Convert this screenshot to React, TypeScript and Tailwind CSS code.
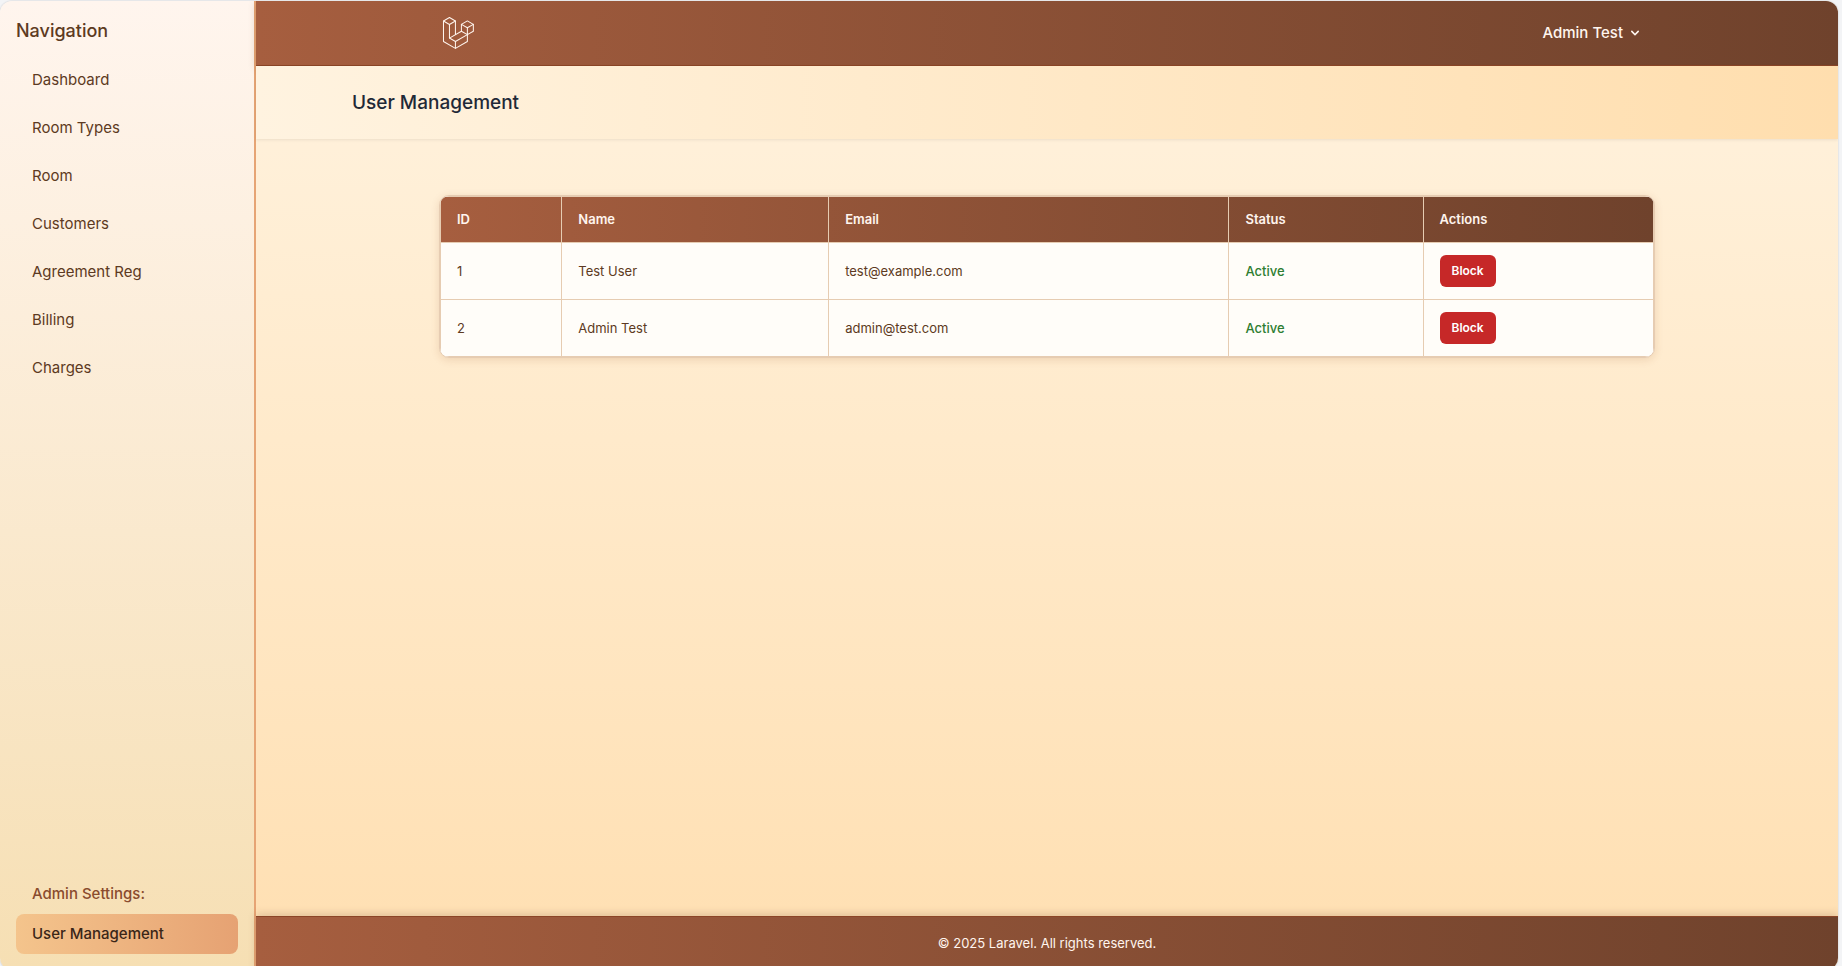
import React from "react";

const navItems = ["Dashboard", "Room Types", "Room", "Customers", "Agreement Reg", "Billing", "Charges"];

interface User {
  id: number;
  name: string;
  email: string;
  status: string;
}

const users: User[] = [
  { id: 1, name: "Test User", email: "test@example.com", status: "Active" },
  { id: 2, name: "Admin Test", email: "admin@test.com", status: "Active" },
];

function Logo() {
  return (
    <svg viewBox="0 0 316 316" className="size-9" fill="none" stroke="currentColor" strokeWidth="9" strokeLinejoin="round" strokeLinecap="round" aria-hidden="true">
      <path d="M91.8 22.4 144.2 52.6 91.8 82.8 39.3 52.6Z" />
      <path d="M39.3 52.6V232.5L144.2 292.7 249.1 232.5V172.3" />
      <path d="M91.8 82.8V202.5L144.2 232.5V292.7M144.2 232.5 249.1 172.3" />
      <path d="M144.2 52.6V172.3M91.8 202.5 196.7 142.2" />
      <path d="M249.1 52 301.5 82.3 249.1 112.5 196.7 82.3Z" />
      <path d="M196.7 82.3V142.2L249.1 172.3 301.5 142.2V82.3M249.1 112.5V172.3" />
    </svg>
  );
}

function Sidebar() {
  return (
    <aside className="flex w-64 shrink-0 flex-col border-r-2 border-[#e6a474] bg-linear-to-b from-[#fff5ee] to-[#f6dfb3] p-4 text-[15px] leading-6 text-[#5d3a22]">
      <h2 className="mb-4 text-lg leading-[27px] font-medium">Navigation</h2>
      <nav className="flex flex-col gap-2">
        {navItems.map((item) => (
          <a key={item} href="#" className="rounded-lg px-4 py-2">
            {item}
          </a>
        ))}
      </nav>
      <div className="mt-auto">
        <p className="mb-2 px-4 font-medium text-[#8a4b2d]">Admin Settings:</p>
        <a href="#" aria-current="page" className="block rounded-lg bg-linear-to-r from-[#f4c48c] to-[#e6a273] px-4 py-2 font-medium text-[#3a2618]">
          User Management
        </a>
      </div>
    </aside>
  );
}

function TopBar() {
  return (
    <div className="border-b border-[#8b4526] bg-linear-to-r from-[#a65e3f] to-[#6f422c] text-[#fff5ee] shadow-[0_2px_8px_rgba(93,58,34,0.2)]">
      <div className="mx-auto flex h-16 max-w-7xl items-center justify-between px-8">
        <a href="#" aria-label="Home">
          <Logo />
        </a>
        <button type="button" className="flex items-center gap-1 px-3 py-2 text-[15px] leading-5 font-medium">
          Admin Test
          <svg viewBox="0 0 20 20" className="size-4" fill="currentColor" aria-hidden="true">
            <path d="M5.293 7.293a1 1 0 011.414 0L10 10.586l3.293-3.293a1 1 0 111.414 1.414l-4 4a1 1 0 01-1.414 0l-4-4a1 1 0 010-1.414z" />
          </svg>
        </button>
      </div>
    </div>
  );
}

function UsersTable() {
  return (
    <div className="overflow-hidden rounded-[10px] border border-[#e6ccb2] bg-[#fffdf9] shadow-[0_2px_8px_rgba(139,69,19,0.15)]">
      <table className="w-full table-fixed border-collapse text-left text-[13px] leading-[21px] text-[#5d3a22]">
        <colgroup>
          <col className="w-[10%]" />
          <col className="w-[22%]" />
          <col className="w-[33%]" />
          <col className="w-[16%]" />
          <col className="w-[19%]" />
        </colgroup>
        <thead>
          <tr className="bg-linear-to-r from-[#a65e3f] to-[#6f422c] text-[#fff5ee]">
            {["ID", "Name", "Email", "Status", "Actions"].map((h) => (
              <th key={h} scope="col" className="border border-[#e6ccb2] px-4 py-3 font-semibold">
                {h}
              </th>
            ))}
          </tr>
        </thead>
        <tbody>
          {users.map((u) => (
            <tr key={u.id}>
              <td className="border border-[#e6ccb2] px-4 py-3">{u.id}</td>
              <td className="border border-[#e6ccb2] px-4 py-3">{u.name}</td>
              <td className="border border-[#e6ccb2] px-4 py-3">{u.email}</td>
              <td className="border border-[#e6ccb2] px-4 py-3 font-medium text-[#2e7d32]">{u.status}</td>
              <td className="border border-[#e6ccb2] px-4 py-3">
                <button type="button" className="block h-8 rounded-md bg-[#c62828] px-3 text-xs font-semibold text-white">
                  Block
                </button>
              </td>
            </tr>
          ))}
        </tbody>
      </table>
    </div>
  );
}

export default function App() {
  return (
    <div className="flex min-h-screen flex-col overflow-hidden bg-[#f3f4f6] pt-px pr-1 font-['Inter',sans-serif] text-base">
      <div className="-mb-1 flex flex-1 overflow-hidden rounded-xl shadow-[0_0_2px_rgba(0,0,0,0.2)]">
        <Sidebar />
        <div className="flex min-w-0 flex-1 flex-col bg-linear-to-b from-[#fff3e0] to-[#ffdfb1]">
          <TopBar />
          <header className="bg-linear-to-r from-[#fff3e0] to-[#ffdeae] shadow-[0_1px_3px_rgba(0,0,0,0.08)]">
            <div className="px-24 py-6">
              <h1 className="text-[19px] leading-[25px] font-medium text-[#1f2937]">User Management</h1>
            </div>
          </header>
          <main className="mx-auto w-full max-w-7xl flex-1 px-8 py-14">
            <UsersTable />
          </main>
          <footer className="border-t border-[#8b4526] bg-linear-to-r from-[#a65e3f] to-[#6f422c] py-4 text-center text-[13px] leading-[21px] text-[#fff5ee] shadow-[0_-2px_8px_rgba(93,58,34,0.2)]">
            © 2025 Laravel. All rights reserved.
          </footer>
        </div>
      </div>
    </div>
  );
}
